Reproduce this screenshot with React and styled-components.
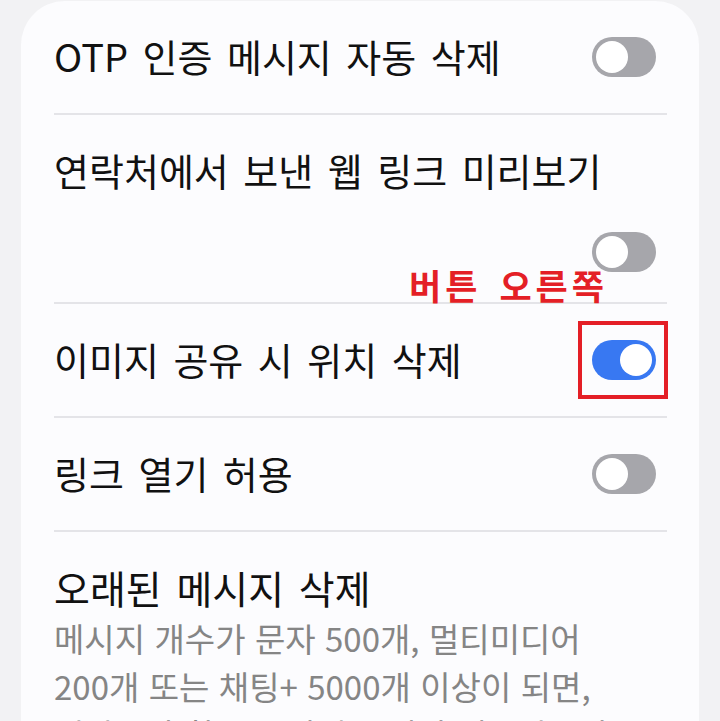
import React from 'react';
import styled, { createGlobalStyle, css } from 'styled-components';

const GlobalStyle = createGlobalStyle`
  html, body {
    margin: 0;
    padding: 0;
    background: #f2f2f4;
    overflow: hidden;
  }
  body {
    font-family: "Noto Sans CJK KR", "Noto Sans", sans-serif;
  }
`;

const Page = styled.div`
  width: 720px;
  height: 721px;
  overflow: hidden;
  background: #f2f2f4;
  padding: 1px 21px 0 21px;
  box-sizing: border-box;
`;

const Card = styled.div`
  background: #fcfcfe;
  border-radius: 44px 44px 0 0;
  padding: 0 32px 0 33px;
  min-height: 760px;
`;

const Row = styled.div`
  display: flex;
  align-items: center;
  justify-content: space-between;
  min-height: 112px;
  border-bottom: 2px solid #e4e4e8;
  ${(props) =>
    props.stacked &&
    css`
      flex-direction: column;
      align-items: stretch;
      justify-content: flex-start;
      padding: 38px 0 30px;
      min-height: 0;
    `}
  ${(props) =>
    props.last &&
    css`
      display: block;
      border-bottom: none;
      padding-top: 34px;
    `}
`;

const Title = styled.div`
  font-size: 38px;
  line-height: 40px;
  word-spacing: 6px;
  color: #111111;
  white-space: nowrap;
  margin-top: -3px;
  ${(props) =>
    props.tall &&
    css`
      font-size: 39px;
      line-height: 48px;
    `}
`;

const Sub = styled.div`
  font-size: 33px;
  line-height: 48px;
  word-spacing: 2px;
  color: #858585;
  white-space: nowrap;
  margin-top: 3px;
`;

const ToggleWrap = styled.div`
  position: relative;
  margin-right: 11px;
  ${(props) =>
    props.below &&
    css`
      align-self: flex-end;
      margin-top: 42px;
    `}
`;

const Track = styled.div`
  width: 64px;
  height: 40px;
  border-radius: 20px;
  background: ${(props) => (props.on ? '#3878f2' : '#a6a6ab')};
  display: flex;
  align-items: center;
  justify-content: ${(props) => (props.on ? 'flex-end' : 'flex-start')};
  padding: 0 4px;
  box-sizing: border-box;
`;

const Knob = styled.div`
  width: 32px;
  height: 32px;
  border-radius: 50%;
  background: #ffffff;
`;

const Highlight = styled.div`
  position: absolute;
  top: -19px;
  bottom: -19px;
  left: -14px;
  right: -12px;
  border: 4px solid #e41f26;
  pointer-events: none;
`;

const Label = styled.div`
  position: absolute;
  right: 48px;
  top: -75px;
  font-size: 35px;
  line-height: 40px;
  font-weight: 700;
  letter-spacing: 4px;
  word-spacing: 6px;
  color: #e41f26;
  white-space: nowrap;
`;

function Toggle({ on }) {
  return (
    <Track on={on ? 1 : 0}>
      <Knob />
    </Track>
  );
}

export default function App() {
  return (
    <>
      <GlobalStyle />
      <Page>
        <Card>
          <Row>
            <Title>OTP 인증 메시지 자동 삭제</Title>
            <ToggleWrap>
              <Toggle />
            </ToggleWrap>
          </Row>
          <Row stacked>
            <Title>연락처에서 보낸 웹 링크 미리보기</Title>
            <ToggleWrap below>
              <Toggle />
            </ToggleWrap>
          </Row>
          <Row>
            <Title>이미지 공유 시 위치 삭제</Title>
            <ToggleWrap>
              <Label>버튼 오른쪽</Label>
              <Toggle on />
              <Highlight />
            </ToggleWrap>
          </Row>
          <Row>
            <Title>링크 열기 허용</Title>
            <ToggleWrap>
              <Toggle />
            </ToggleWrap>
          </Row>
          <Row last>
            <Title tall>오래된 메시지 삭제</Title>
            <Sub>
              메시지 개수가 문자 500개, 멀티미디어
              <br />
              200개 또는 채팅+ 5000개 이상이 되면,
              <br />
              저장공간 확보를 위해 오래된 메시지부터
            </Sub>
          </Row>
        </Card>
      </Page>
    </>
  );
}
